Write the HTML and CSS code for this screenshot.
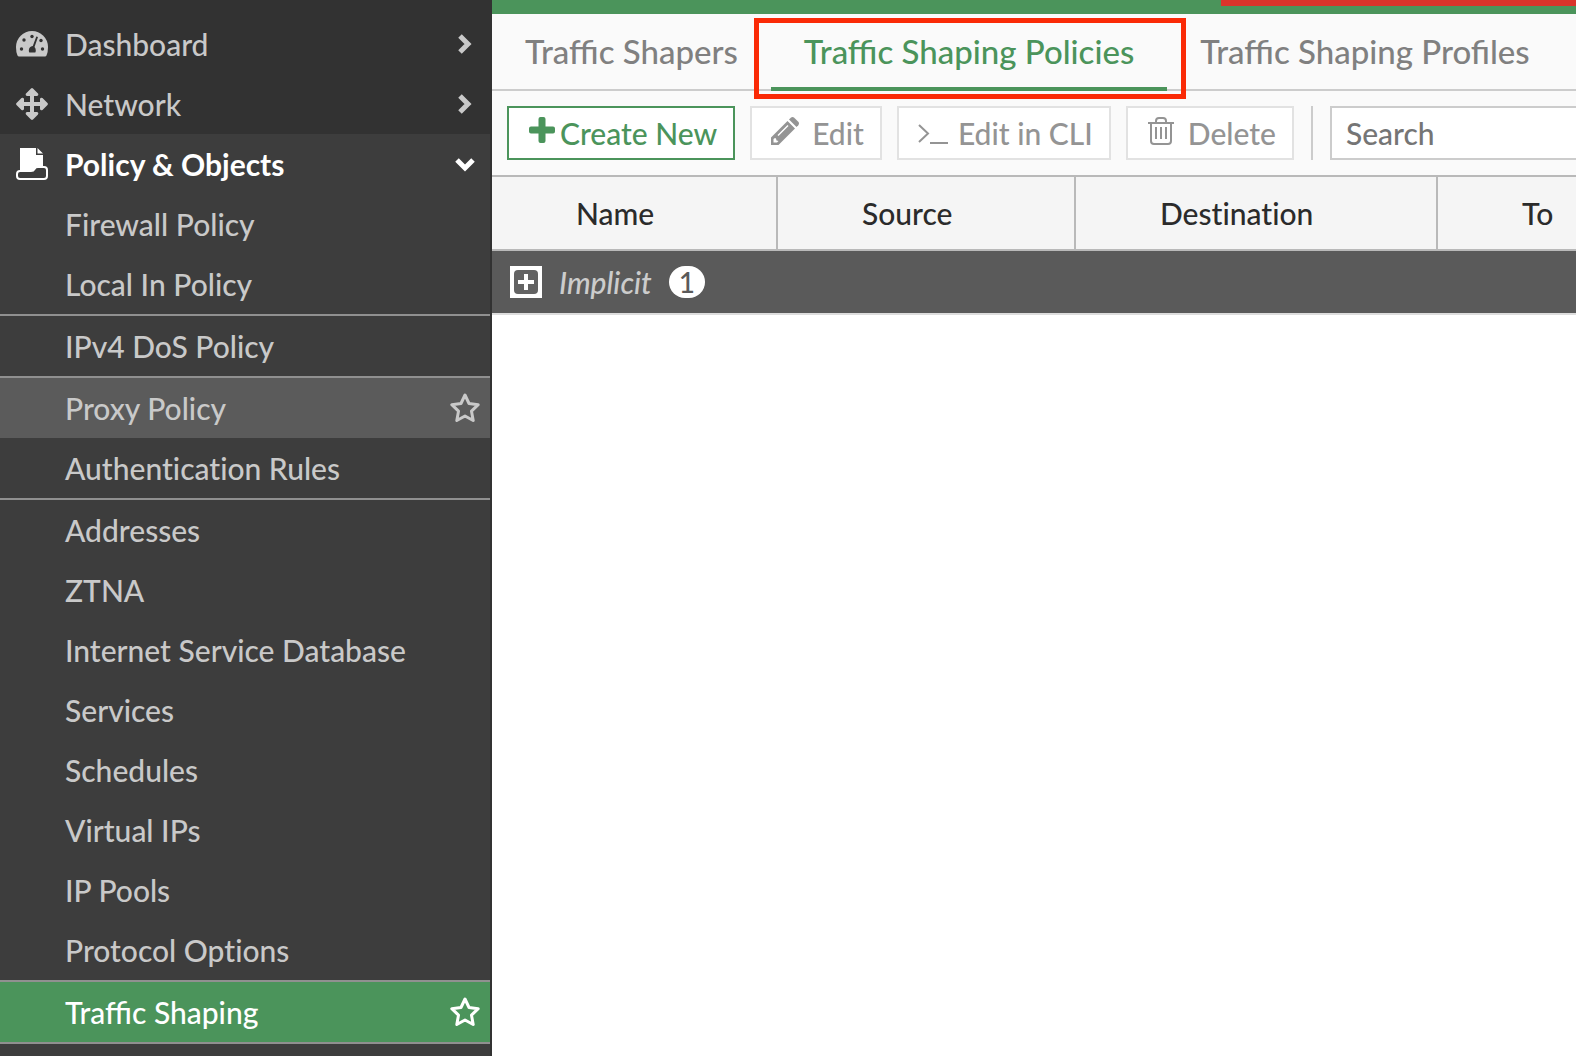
FILE: index.html
```html
<!DOCTYPE html>
<html lang="en">
<head>
    <meta charset="UTF-8">
    <meta name="viewport" content="width=device-width, initial-scale=1.0">
    <title>Traffic Shaping Policies</title>
    <link rel="stylesheet" href="styles.css">
</head>
<body>
    <nav class="sidebar">
        <a class="menu-item" href="#">
            <svg class="menu-icon" viewBox="0 0 32 32">
                <path fill="currentColor" d="M3 28.500q-1 0-1.500-1Q0 24.500 0 19a16 16 0 0 1 32 0q0 5.500-1.500 8.500-.5 1-1.500 1z"/>
                <g fill="#323232">
                    <circle cx="16" cy="8.500" r="1.700"/>
                    <circle cx="8" cy="12" r="1.700"/>
                    <circle cx="5.500" cy="21" r="1.700"/>
                    <circle cx="26.500" cy="21" r="1.700"/>
                    <circle cx="25" cy="12.500" r="1.700"/>
                    <path d="M20.300 8.500L16.800 18q-4 .5-4 4.500 0 1 .5 2h6q.5-1 .5-2 0-2.200-1.300-3.500L22 9z"/>
                </g>
            </svg>
            <span>Dashboard</span>
            <svg class="chevron" viewBox="0 0 20 20"><path d="M5 2l8 8-8 8"/></svg>
        </a>
        <a class="menu-item" href="#">
            <svg class="menu-icon" viewBox="0 0 32 32">
                <path fill="currentColor" d="M15 .5q1-.8 2 0l5 5q1 2-1 2.500h-3v6h6v-3q.5-2 2.500-1l5 5q.8 1 0 2l-5 5q-2 1-2.500-1v-3h-6v6h3q2 .5 1 2.500l-5 5q-1 .8-2 0l-5-5q-1-2 1-2.500h3v-6H8v3q-.5 2-2.500 1l-5-5q-.8-1 0-2l5-5q2-1 2.500 1v3h6V8h-3q-2-.5-1-2.500z"/>
            </svg>
            <span>Network</span>
            <svg class="chevron" viewBox="0 0 20 20"><path d="M5 2l8 8-8 8"/></svg>
        </a>
        <div class="menu-group">
            <a class="menu-item open" href="#">
                <svg class="menu-icon" viewBox="0 0 32 32">
                    <path fill="currentColor" d="M4 0h16v7h7v14h-8l-3 5H4zM21.500 0L27 5.500h-5.500z"/>
                    <path fill="#3d3d3d" stroke="currentColor" stroke-width="2" d="M28 19q3 0 3 3v6q0 3-3 3H4q-3 0-3-3v-2q0-3 3-3h11q2.500 0 3.500-2T22 19z"/>
                </svg>
                <span>Policy &amp; Objects</span>
                <svg class="chevron" viewBox="0 0 20 20"><path d="M2 6l8 8 8-8"/></svg>
            </a>
            <a class="menu-item" href="#"><span>Firewall Policy</span></a>
            <a class="menu-item" href="#"><span>Local In Policy</span></a>
            <a class="menu-item divided" href="#"><span>IPv4 DoS Policy</span></a>
            <a class="menu-item divided hovered" href="#">
                <span>Proxy Policy</span>
                <svg class="star" viewBox="0 0 30 30"><path d="M15 2l4 8.500 9.200 1.200-6.700 6.500 1.700 9.300-8.200-4.500-8.200 4.500 1.700-9.300-6.700-6.500 9.200-1.200z"/></svg>
            </a>
            <a class="menu-item no-liga" href="#"><span>Authentication Rules</span></a>
            <a class="menu-item divided" href="#"><span>Addresses</span></a>
            <a class="menu-item" href="#"><span>ZTNA</span></a>
            <a class="menu-item" href="#"><span>Internet Service Database</span></a>
            <a class="menu-item" href="#"><span>Services</span></a>
            <a class="menu-item" href="#"><span>Schedules</span></a>
            <a class="menu-item" href="#"><span>Virtual IPs</span></a>
            <a class="menu-item" href="#"><span>IP Pools</span></a>
            <a class="menu-item no-liga" href="#"><span>Protocol Options</span></a>
            <a class="menu-item divided active" href="#">
                <span>Traffic Shaping</span>
                <svg class="star" viewBox="0 0 30 30"><path d="M15 2l4 8.500 9.200 1.200-6.700 6.500 1.700 9.300-8.200-4.500-8.200 4.500 1.700-9.300-6.700-6.500 9.200-1.200z"/></svg>
            </a>
            <div class="menu-end"></div>
        </div>
    </nav>

    <main class="content">
        <div class="top-bar"><div class="alert-bar"></div></div>

        <div class="tabs">
            <a class="tab" href="#">Traffic Shapers</a>
            <a class="tab selected" href="#">Traffic Shaping Policies<span class="highlight"></span></a>
            <a class="tab" href="#">Traffic Shaping Profiles</a>
        </div>

        <div class="toolbar">
            <button class="btn create" type="button">
                <svg class="plus-icon" viewBox="0 0 26 26"><path fill="currentColor" d="M11.500 0h3q2 0 2 2v7.500H24q2 0 2 2v3q0 2-2 2h-7.500V24q0 2-2 2h-3q-2 0-2-2v-7.500H2q-2 0-2-2v-3q0-2 2-2h7.500V2q0-2 2-2z"/></svg>
                Create New
            </button>
            <button class="btn" type="button" disabled>
                <svg class="btn-icon" viewBox="0 0 28 28">
                    <path fill="currentColor" fill-rule="evenodd" d="M0 28v-7.500L16.500 4l7.500 7.500L7.500 28zM2.500 22v3.500H6l1.500-1.500-2-.5-.5-2-1-.5zM6.500 18l1 1L17.500 9l-1-1z"/>
                    <path fill="currentColor" d="M18 2.500L19.800.700q1.700-1.400 3.400 0l4.100 4.100q1.400 1.700 0 3.400L25.500 10z"/>
                </svg>
                Edit
            </button>
            <button class="btn" type="button" disabled>
                <svg class="cli-icon" viewBox="0 0 30 28"><path fill="none" stroke="currentColor" stroke-width="2" d="M1 6l9 8.500L1 23M12 24h18"/></svg>
                Edit in CLI
            </button>
            <button class="btn" type="button" disabled>
                <svg class="btn-icon" viewBox="0 0 28 28">
                    <path fill="none" stroke="currentColor" stroke-width="2" d="M1 6h26M9 6V4q0-3 3-3h4q3 0 3 3v2M4 6v18q0 3 3 3h14q3 0 3-3V6M9 10v12M14 10v12M19 10v12"/>
                </svg>
                Delete
            </button>
            <div class="separator"></div>
            <input class="search" type="text" placeholder="Search" aria-label="Search">
        </div>

        <table class="policies">
            <colgroup>
                <col class="col-name">
                <col class="col-source">
                <col class="col-destination">
                <col>
            </colgroup>
            <thead>
                <tr>
                    <th>Name</th>
                    <th>Source</th>
                    <th class="no-liga">Destination</th>
                    <th>To</th>
                </tr>
            </thead>
            <tbody>
                <tr>
                    <td colspan="4">
                        <div class="group-row">
                            <button class="expand" type="button" aria-label="Expand Implicit">
                                <svg viewBox="0 0 32 32">
                                    <rect width="32" height="32" fill="#fff"/>
                                    <rect x="4" y="4" width="24" height="24" rx="4" fill="#636363"/>
                                    <path d="M16 8v16M8 16h16" stroke="#fff" stroke-width="4"/>
                                </svg>
                            </button>
                            <em>Implicit</em>
                            <span class="count">1</span>
                        </div>
                    </td>
                </tr>
            </tbody>
        </table>
    </main>
</body>
</html>
```

FILE: styles.css
```css
* {
    box-sizing: border-box;
}

body {
    margin: 0;
    display: flex;
    height: 100vh;
    overflow: hidden;
    background-color: #fff;
    font-family: Lato, "Open Sans", sans-serif;
    font-size: 30px;
    font-weight: 500;
    line-height: 36px;
}

a {
    text-decoration: none;
}

.no-liga {
    font-variant-ligatures: none;
}

/* Sidebar */
.sidebar {
    flex: none;
    width: 492px;
    padding-top: 14px;
    overflow: hidden;
    background-color: #323232;
    border-right: 2px solid #323232;
}
.menu-group {
    background-color: #3d3d3d;
}
.menu-item {
    display: flex;
    align-items: center;
    box-sizing: content-box;
    height: 60px;
    padding: 0 10px 0 65px;
    color: #c9c9c9;
}
.menu-item span {
    flex: 1;
}
.menu-icon {
    width: 32px;
    height: 32px;
    margin-left: -49px;
    margin-right: 17px;
}
.menu-item.open {
    color: #fff;
    font-weight: bold;
}
.menu-item.divided {
    border-top: 2px solid #909090;
}
.menu-item.hovered {
    background-color: #5b5b5b;
}
.menu-item.active {
    background-color: #4b945b;
    border-bottom: 2px solid #909090;
    color: #fff;
}
.menu-end {
    height: 60px;
}
.chevron {
    width: 20px;
    height: 20px;
    margin-right: 5px;
    fill: none;
    stroke: currentColor;
    stroke-width: 5;
}
.star {
    width: 30px;
    height: 30px;
    fill: none;
    stroke: currentColor;
    stroke-width: 3;
    stroke-linejoin: round;
}

/* Main area */
.content {
    flex: 1;
    min-width: 0;
    overflow: hidden;
}
.top-bar {
    height: 14px;
    background-color: #4b945b;
}
.alert-bar {
    width: 355px;
    height: 6px;
    margin-left: auto;
    background-color: #d9342b;
}

.tabs {
    display: flex;
    height: 77px;
    background-color: #fafafa;
    border-bottom: 2px solid #ccc;
}
.tab {
    position: relative;
    flex: none;
    height: 77px;
    padding: 0 33px;
    border-bottom: 4px solid transparent;
    color: #808080;
    font-size: 33px;
    line-height: 74px;
    white-space: nowrap;
}
.tab.selected {
    border-color: #4b945b;
    color: #4b945b;
}
.highlight {
    position: absolute;
    top: 4px;
    right: -19px;
    bottom: -12px;
    left: -17px;
    border: 5px solid #fa2a06;
}

.toolbar {
    display: flex;
    gap: 15px;
    padding: 15px;
    overflow: hidden;
    background-color: #fafafa;
}
.btn {
    flex: none;
    display: flex;
    align-items: center;
    height: 54px;
    padding: 0 16px 0 19px;
    background-color: #fff;
    border: 2px solid #e2e2e2;
    color: #949494;
    font: inherit;
}
.btn.create {
    padding-left: 20px;
    border-color: #4b945b;
    color: #4b945b;
}
.plus-icon {
    width: 26px;
    height: 26px;
    margin: 0 5px 6px 0;
}
.btn-icon {
    width: 28px;
    height: 28px;
    margin: 0 13px 4px 0;
}
.cli-icon {
    width: 30px;
    height: 28px;
    margin-right: 10px;
}
.separator {
    flex: none;
    width: 2px;
    height: 54px;
    margin: 0 2px;
    background-color: #ccc;
}
.search {
    flex: 1 0 400px;
    height: 54px;
    padding: 0 14px;
    background-color: #fff;
    border: 2px solid #ccc;
    color: #333;
    font: inherit;
}
.search::placeholder {
    color: #757575;
}

/* Policy table */
.policies {
    width: 100%;
    table-layout: fixed;
    border-collapse: separate;
    border-spacing: 0;
}
.col-name {
    width: 286px;
}
.col-source {
    width: 298px;
}
.col-destination {
    width: 362px;
}
.policies th {
    height: 76px;
    padding: 0 0 0 84px;
    background-color: #f5f5f5;
    border-top: 2px solid #b9b9b9;
    border-right: 2px solid #b9b9b9;
    border-bottom: 2px solid #b9b9b9;
    color: #2b2b2b;
    font-weight: 500;
    text-align: left;
}
.policies th:last-child {
    border-right: none;
}
.policies td {
    height: 64px;
    padding: 0 18px;
    background-color: #5a5a5a;
    border-bottom: 2px solid #ddd;
}
.group-row {
    display: flex;
    align-items: center;
    color: #ccc;
}
.expand {
    width: 32px;
    height: 32px;
    margin-right: 17px;
    padding: 0;
    background: none;
    border: none;
}
.expand svg {
    display: block;
}
.count {
    min-width: 36px;
    height: 32px;
    margin-left: 17px;
    border-radius: 16px;
    background-color: #fff;
    color: #5a5a5a;
    font-size: 28px;
    line-height: 32px;
    text-align: center;
}
```
